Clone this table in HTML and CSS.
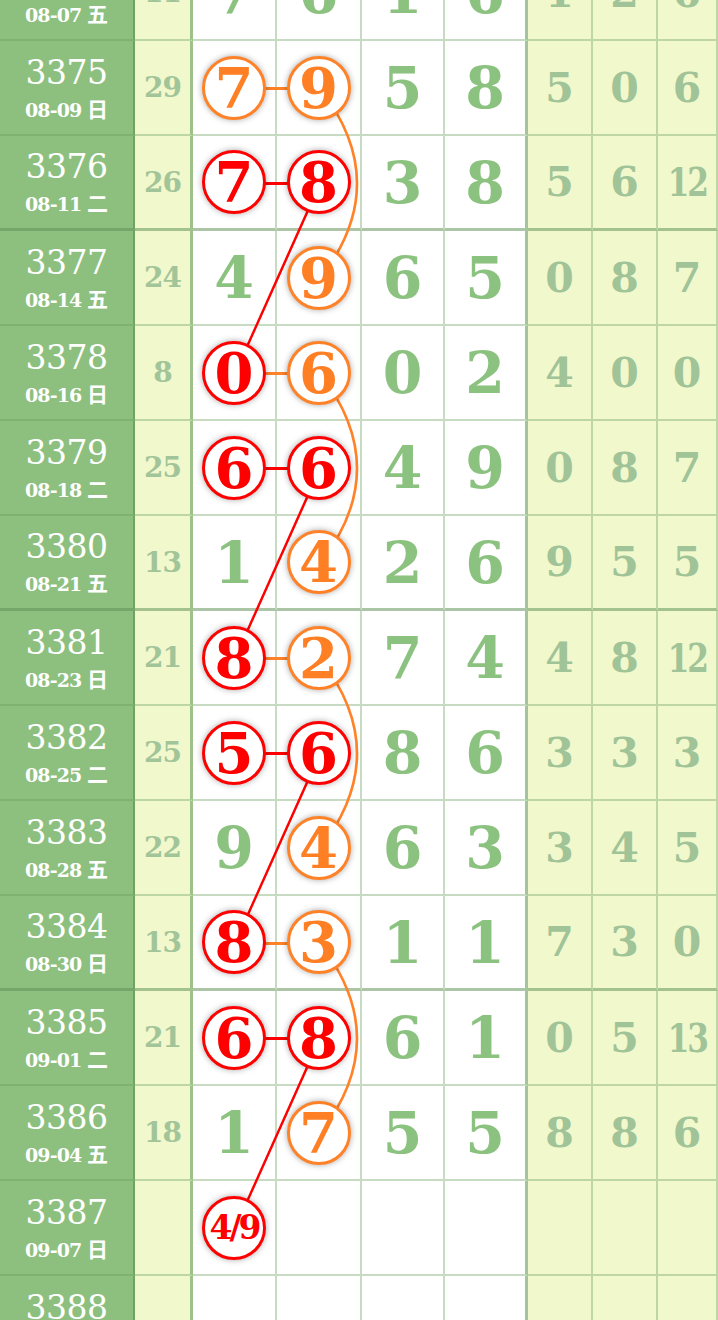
FILE: index.html
```html
<!DOCTYPE html>
<html lang="zh-CN">
<head>
    <meta charset="UTF-8">
    <meta name="viewport" content="width=device-width, initial-scale=1.0">
    <title>走势图</title>
    <link rel="stylesheet" href="styles.css">
</head>
<body>

    <div class="board">
        <!-- links between the drawn balls, in page coordinates -->
        <svg class="links" viewBox="0 -54 718 1425" width="718" height="1425">
            <g class="orange-arc">
                <path d="M320 88.5 Q394 183.5 320 278.5"/>
                <path d="M320 373.5 Q394 468.5 320 563.5"/>
                <path d="M320 658.5 Q394 753.5 320 848.5"/>
                <path d="M320 943.5 Q394 1038.5 320 1133.5"/>
            </g>
            <g class="red-line">
                <line x1="320" y1="183.5" x2="235" y2="373.5"/>
                <line x1="320" y1="468.5" x2="235" y2="658.5"/>
                <line x1="320" y1="753.5" x2="235" y2="943.5"/>
                <line x1="320" y1="1038.5" x2="235" y2="1228.5"/>
            </g>
            <g class="pair">
                <line class="o" x1="235" y1="88.5" x2="320" y2="88.5"/>
                <line class="r" x1="235" y1="183.5" x2="320" y2="183.5"/>
                <line class="o" x1="235" y1="373.5" x2="320" y2="373.5"/>
                <line class="r" x1="235" y1="468.5" x2="320" y2="468.5"/>
                <line class="o" x1="235" y1="658.5" x2="320" y2="658.5"/>
                <line class="r" x1="235" y1="753.5" x2="320" y2="753.5"/>
                <line class="o" x1="235" y1="943.5" x2="320" y2="943.5"/>
                <line class="r" x1="235" y1="1038.5" x2="320" y2="1038.5"/>
            </g>
        </svg>

        <div class="row">
            <div class="qi"><span class="no">3374</span><span class="dt">08-07 <span class="wd">五</span></span></div>
            <div class="hz">11</div>
            <div class="n">7</div><div class="n">6</div><div class="n">1</div><div class="n edge">6</div>
            <div class="y">1</div><div class="y">2</div><div class="y">6</div>
        </div>
        <div class="row">
            <div class="qi"><span class="no">3375</span><span class="dt">08-09 <span class="wd">日</span></span></div>
            <div class="hz">29</div>
            <div class="n"><span class="ball org">7</span></div><div class="n"><span class="ball org">9</span></div><div class="n">5</div><div class="n edge">8</div>
            <div class="y">5</div><div class="y">0</div><div class="y">6</div>
        </div>
        <div class="row wk">
            <div class="qi"><span class="no">3376</span><span class="dt">08-11 <span class="wd">二</span></span></div>
            <div class="hz">26</div>
            <div class="n"><span class="ball red">7</span></div><div class="n"><span class="ball red">8</span></div><div class="n">3</div><div class="n edge">8</div>
            <div class="y">5</div><div class="y">6</div><div class="y"><span class="sm">12</span></div>
        </div>
        <div class="row">
            <div class="qi"><span class="no">3377</span><span class="dt">08-14 <span class="wd">五</span></span></div>
            <div class="hz">24</div>
            <div class="n">4</div><div class="n"><span class="ball org">9</span></div><div class="n">6</div><div class="n edge">5</div>
            <div class="y">0</div><div class="y">8</div><div class="y">7</div>
        </div>
        <div class="row">
            <div class="qi"><span class="no">3378</span><span class="dt">08-16 <span class="wd">日</span></span></div>
            <div class="hz">8</div>
            <div class="n"><span class="ball red">0</span></div><div class="n"><span class="ball org">6</span></div><div class="n">0</div><div class="n edge">2</div>
            <div class="y">4</div><div class="y">0</div><div class="y">0</div>
        </div>
        <div class="row">
            <div class="qi"><span class="no">3379</span><span class="dt">08-18 <span class="wd">二</span></span></div>
            <div class="hz">25</div>
            <div class="n"><span class="ball red">6</span></div><div class="n"><span class="ball red">6</span></div><div class="n">4</div><div class="n edge">9</div>
            <div class="y">0</div><div class="y">8</div><div class="y">7</div>
        </div>
        <div class="row wk">
            <div class="qi"><span class="no">3380</span><span class="dt">08-21 <span class="wd">五</span></span></div>
            <div class="hz">13</div>
            <div class="n">1</div><div class="n"><span class="ball org">4</span></div><div class="n">2</div><div class="n edge">6</div>
            <div class="y">9</div><div class="y">5</div><div class="y">5</div>
        </div>
        <div class="row">
            <div class="qi"><span class="no">3381</span><span class="dt">08-23 <span class="wd">日</span></span></div>
            <div class="hz">21</div>
            <div class="n"><span class="ball red">8</span></div><div class="n"><span class="ball org">2</span></div><div class="n">7</div><div class="n edge">4</div>
            <div class="y">4</div><div class="y">8</div><div class="y"><span class="sm">12</span></div>
        </div>
        <div class="row">
            <div class="qi"><span class="no">3382</span><span class="dt">08-25 <span class="wd">二</span></span></div>
            <div class="hz">25</div>
            <div class="n"><span class="ball red">5</span></div><div class="n"><span class="ball red">6</span></div><div class="n">8</div><div class="n edge">6</div>
            <div class="y">3</div><div class="y">3</div><div class="y">3</div>
        </div>
        <div class="row">
            <div class="qi"><span class="no">3383</span><span class="dt">08-28 <span class="wd">五</span></span></div>
            <div class="hz">22</div>
            <div class="n">9</div><div class="n"><span class="ball org">4</span></div><div class="n">6</div><div class="n edge">3</div>
            <div class="y">3</div><div class="y">4</div><div class="y">5</div>
        </div>
        <div class="row wk">
            <div class="qi"><span class="no">3384</span><span class="dt">08-30 <span class="wd">日</span></span></div>
            <div class="hz">13</div>
            <div class="n"><span class="ball red">8</span></div><div class="n"><span class="ball org">3</span></div><div class="n">1</div><div class="n edge">1</div>
            <div class="y">7</div><div class="y">3</div><div class="y">0</div>
        </div>
        <div class="row">
            <div class="qi"><span class="no">3385</span><span class="dt">09-01 <span class="wd">二</span></span></div>
            <div class="hz">21</div>
            <div class="n"><span class="ball red">6</span></div><div class="n"><span class="ball red">8</span></div><div class="n">6</div><div class="n edge">1</div>
            <div class="y">0</div><div class="y">5</div><div class="y"><span class="sm">13</span></div>
        </div>
        <div class="row">
            <div class="qi"><span class="no">3386</span><span class="dt">09-04 <span class="wd">五</span></span></div>
            <div class="hz">18</div>
            <div class="n">1</div><div class="n"><span class="ball org">7</span></div><div class="n">5</div><div class="n edge">5</div>
            <div class="y">8</div><div class="y">8</div><div class="y">6</div>
        </div>
        <div class="row">
            <div class="qi"><span class="no">3387</span><span class="dt">09-07 <span class="wd">日</span></span></div>
            <div class="hz"></div>
            <div class="n"><span class="ball red guess">4/9</span></div><div class="n"></div><div class="n"></div><div class="n edge"></div>
            <div class="y"></div><div class="y"></div><div class="y"></div>
        </div>
        <div class="row">
            <div class="qi"><span class="no">3388</span><span class="dt">09-09 <span class="wd">二</span></span></div>
            <div class="hz"></div>
            <div class="n"></div><div class="n"></div><div class="n"></div><div class="n edge"></div>
            <div class="y"></div><div class="y"></div><div class="y"></div>
        </div>
    </div>

</body>
</html>
```

FILE: styles.css
```css
body {
    margin: 0;
    padding: 0;
    background-color: #fff;
    overflow: hidden;
    font-family: "DejaVu Serif", "Noto Sans CJK SC", serif;
}
.board {
    position: relative;
    width: 718px;
    margin-top: -54px;
}
.links {
    position: absolute;
    left: 0;
    top: 0;
    z-index: 1;
}
.orange-arc path {
    fill: none;
    stroke: #ff8228;
    stroke-width: 2.6;
}
.red-line line {
    stroke: #f00;
    stroke-width: 2.5;
}
.pair line {
    stroke-width: 3;
}
.pair .o {
    stroke: #ff8228;
}
.pair .r {
    stroke: #f00;
}
.row {
    display: grid;
    grid-template-columns: 135px 58px 84px 85px 83px 83px 65px 65px 60px;
    height: 95px;
}
.row > div {
    box-sizing: border-box;
    display: flex;
    align-items: center;
    justify-content: center;
    border-bottom: 2px solid rgba(100, 155, 90, 0.36);
    border-right: 2px solid rgba(100, 155, 90, 0.36);
    font-weight: bold;
}
.row.wk > div {
    border-bottom: 3px solid rgba(95, 145, 85, 0.52);
}
.qi {
    flex-direction: column;
    gap: 6px;
    background-color: #8dc07f;
    color: #fff;
    border-right: 2px solid rgba(60, 110, 50, 0.35) !important;
}
.qi .no {
    font-size: 33px;
    font-weight: normal;
    line-height: 36px;
    letter-spacing: -0.5px;
}
.qi .dt {
    font-size: 19px;
    line-height: 22px;
    font-weight: bold;
    letter-spacing: -0.9px;
}
.qi .wd {
    font-family: "Noto Sans CJK SC", sans-serif;
    font-size: 21px;
    letter-spacing: 0;
}
.hz {
    background-color: #f0f8cc;
    color: #a2c499;
    font-size: 28px;
    letter-spacing: -1px;
    border-right: 3px solid rgba(100, 155, 90, 0.58) !important;
}
.n {
    color: #8cc27f;
    font-size: 57px;
    line-height: 1;
}
.n.edge {
    border-right: 3px solid rgba(100, 155, 90, 0.58);
}
.y {
    background-color: #f0f8cc;
    color: #a0c397;
    font-size: 41px;
}
.y .sm {
    display: inline-block;
    font-size: 39px;
    letter-spacing: -3px;
    transform: scaleX(0.8);
}
.ball {
    position: relative;
    z-index: 2;
    display: flex;
    align-items: center;
    justify-content: center;
    width: 58px;
    height: 58px;
    border: 3px solid;
    border-radius: 50%;
    background-color: #fff;
    box-shadow: 0 0 6px rgba(0, 0, 0, 0.35);
    font-size: 56px;
    line-height: 1;
}
.ball.red {
    color: #f00;
    border-color: #f00;
}
.ball.org {
    color: #ff7f24;
    border-color: #ff8228;
}
.ball.guess {
    font-size: 33px;
    letter-spacing: -3px;
}
```
